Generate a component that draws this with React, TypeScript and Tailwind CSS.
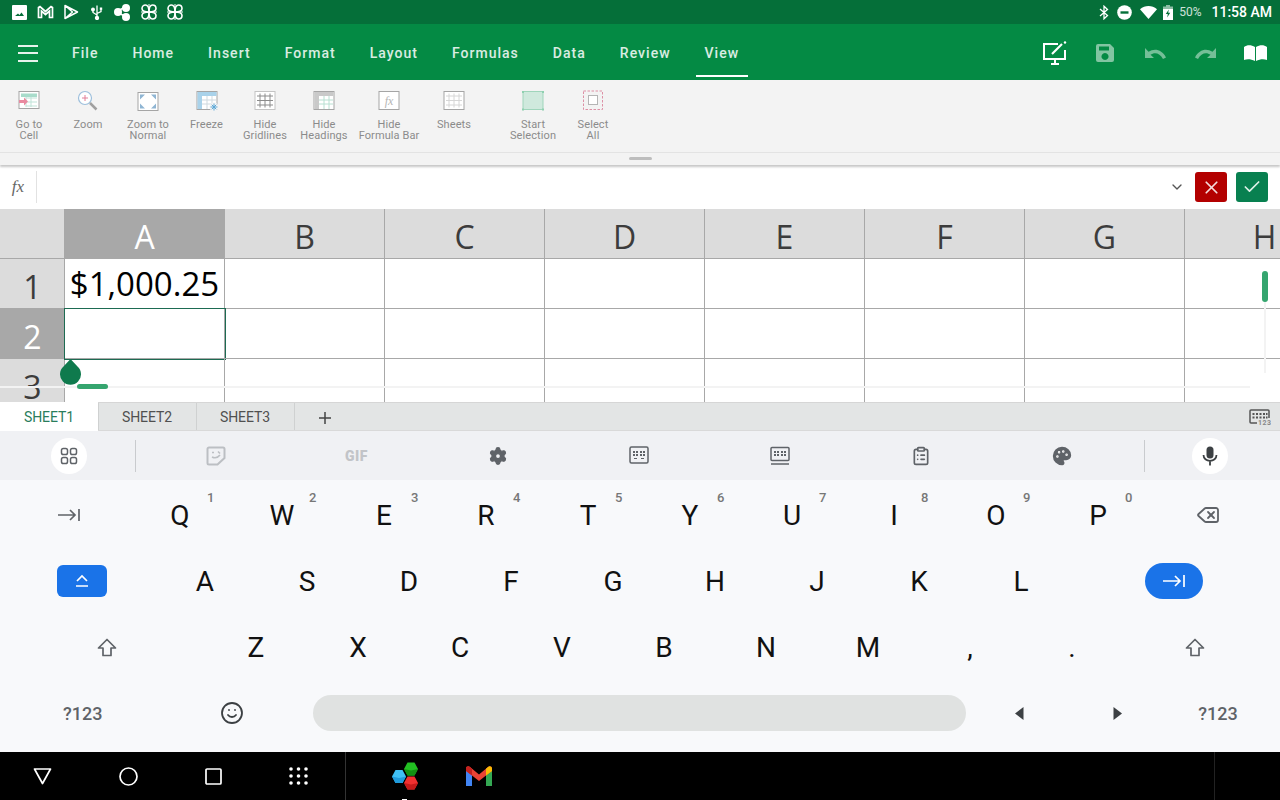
import { ReactNode } from 'react';
import { ChevronDown, Check, X, Settings, ClipboardList, Palette, Smile, Delete } from 'lucide-react';

const menuItems = ['File', 'Home', 'Insert', 'Format', 'Layout', 'Formulas', 'Data', 'Review', 'View'];
const columns = ['A', 'B', 'C', 'D', 'E', 'F', 'G', 'H'];

function Flower() {
  return (
    <svg width="18" height="18" viewBox="0 0 18 18" fill="none" stroke="white" strokeWidth="1.600">
      <path d="M9 9C9 4 7.500 2 5.500 2S2 3.500 2 5.500 4 9 9 9ZM9 9C9 4 10.500 2 12.500 2S16 3.500 16 5.500 14 9 9 9ZM9 9C9 14 7.500 16 5.500 16S2 14.500 2 12.500 4 9 9 9ZM9 9C9 14 10.500 16 12.500 16S16 14.500 16 12.500 14 9 9 9Z" />
      <path d="M1 9H17M9 1V17" strokeWidth="1" />
    </svg>
  );
}

function StatusBar() {
  return (
    <div className="flex h-6 items-center bg-[#056f39] text-white">
      <div className="ml-3 flex items-center">
        <svg width="15" height="15" viewBox="0 0 15 15" fill="white">
          <path fillRule="evenodd" d="M1 0h13a1 1 0 0 1 1 1v13a1 1 0 0 1-1 1H1a1 1 0 0 1-1-1V1a1 1 0 0 1 1-1ZM3 11h9L9.500 7.500 7.500 10 6 8.500Z" />
        </svg>
        <svg className="ml-[10px]" width="17" height="14" viewBox="0 0 17 14" fill="none" stroke="white" strokeWidth="1.700">
          <path d="M1.500 12.500V2.500L3 1.500 8.500 6.500 14 1.500 15.500 2.500V12.500H12.500V6L8.500 9.500 4.500 6V12.500Z" />
        </svg>
        <svg className="ml-[9px]" width="16" height="16" viewBox="0 0 16 16" fill="none" stroke="white" strokeWidth="1.500">
          <path d="M2 1.500 14.500 8 2 14.500ZM2 1.500 9.500 8 2 14.500" strokeLinejoin="round" />
        </svg>
        <svg className="ml-[12px]" width="12" height="16" viewBox="0 0 12 16" fill="none" stroke="white" strokeWidth="1.300">
          <path d="M6 1.500V14M6 11 2 8.500V6M6 9.500 10 7.500V5.500" />
          <circle cx="6" cy="14" r="1.500" fill="white" />
          <circle cx="2" cy="5.500" r="1.300" fill="white" />
          <rect x="8.800" y="3.500" width="2.400" height="2.400" fill="white" stroke="none" />
        </svg>
        <svg className="ml-[11px]" width="17" height="17" viewBox="0 0 17 17" fill="white">
          <circle cx="4" cy="8" r="4" />
          <circle cx="12" cy="4" r="4" />
          <circle cx="12" cy="13" r="4" />
          <path d="M4 7 11 3M4 9 11 12" stroke="white" strokeWidth="1.500" />
        </svg>
        <div className="ml-[9px]"><Flower /></div>
        <div className="ml-2"><Flower /></div>
      </div>
      <div className="ml-auto flex items-center pr-2">
        <svg width="10" height="15" viewBox="0 0 10 15" fill="none" stroke="white" strokeWidth="1.300">
          <path d="M1 4 8.500 10.500 5 13.800V1.200L8.500 4.500 1 11" />
        </svg>
        <svg className="ml-[8px]" width="15" height="15" viewBox="0 0 15 15">
          <circle cx="7.500" cy="7.500" r="7.300" fill="white" />
          <rect x="3.500" y="6.300" width="8" height="2.400" fill="#056f39" />
        </svg>
        <svg className="ml-[8px]" width="17" height="13" viewBox="0 0 17 13" fill="white">
          <path d="M0 3.200C5-1 12-1 17 3.200L8.500 13Z" />
        </svg>
        <svg className="ml-[6px]" width="10" height="15" viewBox="0 0 10 15">
          <path d="M3 0h4v1.500h3V15H0V1.500h3Z" fill="white" />
          <path d="M0 0h10v4H0Z" fill="#056f39" fillOpacity="0.45" />
          <path d="M5.800 4.500 2.800 9h2l-.6 3.500 3-4.700h-2Z" fill="#056f39" />
        </svg>
        <span className="ml-[6px] font-['Roboto',sans-serif] text-[12px] text-white/80">50%</span>
        <span className="ml-[10px] font-['Roboto',sans-serif] text-[14px] font-medium">11:58 AM</span>
      </div>
    </div>
  );
}

function Toolbar() {
  return (
    <div className="flex h-14 items-center bg-[#048a44] pt-[2px] font-['Roboto',sans-serif] text-white">
      <div className="ml-[18px] flex h-[17px] w-5 flex-col justify-between">
        <div className="h-0.5 bg-white/90" />
        <div className="h-0.5 bg-white/90" />
        <div className="h-0.5 bg-white/90" />
      </div>
      <div className="ml-[34px] flex h-full items-center gap-[34px]">
        {menuItems.map((item) => (
          <div key={item} className="relative flex h-full items-center text-[14px] font-medium tracking-[1.02px] text-white/85">
            {item}
            {item === 'View' && <div className="absolute -inset-x-[9px] bottom-[3px] h-0.5 bg-white" />}
          </div>
        ))}
      </div>
      <div className="ml-auto flex items-center">
        <div className="flex w-[50px] justify-center">
          <svg width="26" height="24" viewBox="0 0 26 24" fill="none" stroke="white" strokeWidth="2">
            <path d="M16 3H2V18H23V9" />
            <path d="M9 23H17M13 18V23" />
            <path d="M10 13 20 3" strokeWidth="2.200" />
            <circle cx="23" cy="1.500" r="1.200" fill="white" stroke="none" />
          </svg>
        </div>
        <div className="flex w-[50px] justify-center">
          <svg width="18" height="18" viewBox="0 0 18 18" fill="white" fillOpacity="0.5">
            <path fillRule="evenodd" d="M2 0h12l4 4v12a2 2 0 0 1-2 2H2a2 2 0 0 1-2-2V2a2 2 0 0 1 2-2ZM3 2.500V6.500H13V2.500ZM9 9a3.500 3.500 0 1 0 .01 0Z" />
          </svg>
        </div>
        <div className="flex w-[50px] justify-center">
          <svg width="21" height="11" viewBox="0 0 21 11" fill="white" fillOpacity="0.45">
            <path d="M0 0V10H9L5.500 6.800C9.500 3.800 15 5 18 11L21 9.500C17 1.500 9.500 0 3.500 3.800Z" />
          </svg>
        </div>
        <div className="flex w-[50px] justify-center">
          <svg width="21" height="11" viewBox="0 0 21 11" fill="white" fillOpacity="0.45">
            <path d="M21 0V10H12L15.500 6.800C11.500 3.800 6 5 3 11L0 9.500C4 1.500 11.500 0 17.500 3.800Z" />
          </svg>
        </div>
        <div className="flex w-[50px] justify-center">
          <svg width="23" height="17" viewBox="0 0 23 17" fill="white">
            <path d="M0 2C3-.3 7-.5 11 2V16C7 14 3 14 0 15ZM12 2C16-.5 20-.3 23 2V15C20 14 16 14 12 16Z" />
          </svg>
        </div>
      </div>
    </div>
  );
}

function RibbonIcon({ children }: { children: ReactNode }) {
  return (
    <svg width="26" height="26" viewBox="0 0 26 26" fill="none">
      {children}
    </svg>
  );
}

const grayFrame = '#a5a5a5';

const ribbonItems: { lines: string[]; width: string; icon: ReactNode }[] = [
  {
    lines: ['Go to', 'Cell'],
    width: 'w-[58px]',
    icon: (
      <RibbonIcon>
        <rect x="3" y="2.500" width="20" height="17" stroke={grayFrame} fill="white" />
        <rect x="5" y="4.500" width="16" height="3.500" fill="#a8dccb" />
        <path d="M10 9H21M10 13H21M10 17H21M15 8V18M10 8V18" stroke="#bfe3d8" />
        <path d="M3 11H8V8.500L12 12.500 8 16.500V14H3Z" fill="#e98aa0" />
      </RibbonIcon>
    ),
  },
  {
    lines: ['Zoom'],
    width: 'w-[60px]',
    icon: (
      <RibbonIcon>
        <circle cx="10" cy="9" r="6.500" stroke="#9dbfdc" strokeWidth="1.200" fill="white" />
        <path d="M7 9H13M10 6V12" stroke="#e27f98" />
        <path d="M15 14 21.500 20.500" stroke="#a0a0a0" strokeWidth="2.500" />
      </RibbonIcon>
    ),
  },
  {
    lines: ['Zoom to', 'Normal'],
    width: 'w-[60px]',
    icon: (
      <RibbonIcon>
        <rect x="3" y="3.500" width="20" height="18" stroke={grayFrame} fill="white" />
        <path d="M5 5.500H10L5 10.500ZM21 5.500H16L21 10.500ZM5 19.500H10L5 14.500ZM21 19.500H16L21 14.500Z" fill="#8fb5d3" />
      </RibbonIcon>
    ),
  },
  {
    lines: ['Freeze'],
    width: 'w-[57px]',
    icon: (
      <RibbonIcon>
        <rect x="3" y="2.500" width="20" height="18" stroke={grayFrame} fill="white" />
        <path d="M3.500 3H22.500V7H8V20H3.500Z" fill="#a9d2ea" />
        <path d="M8 11H22M8 15H20M13 7V20M18 7V18" stroke="#cfd9df" />
        <circle cx="20" cy="18" r="4.500" fill="#f3f3f3" />
        <path d="M20 14.500V21.500M16.500 18H23.500M17.700 15.700 22.300 20.300M22.300 15.700 17.700 20.300" stroke="#5ba7d6" />
      </RibbonIcon>
    ),
  },
  {
    lines: ['Hide', 'Gridlines'],
    width: 'w-[60px]',
    icon: (
      <RibbonIcon>
        <rect x="3" y="2.500" width="20" height="18" stroke="#c4c4c4" fill="white" />
        <path d="M5 7H21M5 11.500H21M5 16H21M8 4.500V18.500M13 4.500V18.500M18 4.500V18.500" stroke="#8c8c8c" />
      </RibbonIcon>
    ),
  },
  {
    lines: ['Hide', 'Headings'],
    width: 'w-[58px]',
    icon: (
      <RibbonIcon>
        <rect x="3" y="2.500" width="20" height="18" stroke={grayFrame} fill="white" />
        <path d="M3.500 3H22.500V7H8V20H3.500Z" fill="#c9c9c9" />
        <path d="M8 11H22M8 15H22M13 7V20M18 7V20" stroke="#b8e0d2" />
      </RibbonIcon>
    ),
  },
  {
    lines: ['Hide', 'Formula Bar'],
    width: 'w-[72px]',
    icon: (
      <RibbonIcon>
        <rect x="3" y="2.500" width="20" height="18" stroke={grayFrame} fill="white" />
        <text x="13" y="15.500" textAnchor="middle" fontFamily="'Liberation Serif', serif" fontStyle="italic" fontSize="12" fill="#b5b5b5">
          fx
        </text>
      </RibbonIcon>
    ),
  },
  {
    lines: ['Sheets'],
    width: 'w-[58px]',
    icon: (
      <RibbonIcon>
        <rect x="3" y="2.500" width="20" height="18" stroke={grayFrame} fill="white" />
        <path d="M5 7H21M5 11.500H21M5 16H21M8 4.500V18.500M13 4.500V18.500M18 4.500V18.500" stroke="#d6d6d6" />
      </RibbonIcon>
    ),
  },
  {
    lines: ['Start', 'Selection'],
    width: 'ml-5 w-[60px]',
    icon: (
      <RibbonIcon>
        <rect x="3" y="2.500" width="20" height="18" stroke="#9fd5bb" fill="#cfe9dd" />
        <path d="M2 2h2v2H2ZM22 2h2v2h-2ZM2 19.500h2v2H2ZM22 19.500h2v2h-2Z" fill="#8fd0b0" />
      </RibbonIcon>
    ),
  },
  {
    lines: ['Select', 'All'],
    width: 'w-[60px]',
    icon: (
      <RibbonIcon>
        <rect x="3.500" y="2" width="19" height="18.500" stroke="#dd90a5" strokeDasharray="2.500 1.500" />
        <rect x="8.500" y="6.500" width="9" height="9" stroke="#b5b5b5" fill="white" />
      </RibbonIcon>
    ),
  },
];

function Ribbon() {
  return (
    <div className="relative z-10 bg-[#f3f3f3] shadow-[0_2px_2px_rgba(0,0,0,0.22)]">
      <div className="flex h-[73px] border-b border-[#e3e3e3] pt-[9px]">
        {ribbonItems.map((item) => (
          <div key={item.lines.join(' ')} className={`flex flex-col items-center ${item.width}`}>
            {item.icon}
            <div className="mt-[4px] text-center font-['Roboto',sans-serif] text-[11px] leading-[11px] tracking-[0.1px] text-[#8b8b8b]">
              {item.lines.map((line) => (
                <div key={line} className="whitespace-nowrap">{line}</div>
              ))}
            </div>
          </div>
        ))}
      </div>
      <div className="flex h-3 justify-center pt-[4px]">
        <div className="h-[3px] w-[23px] rounded-full bg-[#bdbdbd]" />
      </div>
    </div>
  );
}

function FormulaBar() {
  return (
    <div className="flex h-[44px] items-center bg-white">
      <div className="w-9 text-center font-['Liberation_Serif',serif] text-[17px] italic text-[#666666]">fx</div>
      <div className="h-[32px] w-px bg-[#e2e2e2]" />
      <ChevronDown className="ml-auto text-[#555555]" size={16} strokeWidth={2} />
      <div className="ml-[10px] flex h-[30px] w-8 items-center justify-center rounded-[3px] bg-[#b30000]">
        <X className="text-[#f4dcdc]" size={21} strokeWidth={2} />
      </div>
      <div className="ml-[9px] mr-3 flex h-[30px] w-8 items-center justify-center rounded-[3px] bg-[#088050]">
        <Check className="text-[#dff0e8]" size={20} strokeWidth={2} />
      </div>
    </div>
  );
}

function Grid() {
  const headBase = 'flex items-center justify-center border-r border-[#a8a8a8] text-[32px] leading-[26px]';
  const rows = [
    { n: 1, cell: 'h-[50px] border-b', head: 'h-[50px] border-b pt-[6px]', selected: false },
    { n: 2, cell: 'h-[50px] border-b', head: 'h-[50px] border-b pt-[6px]', selected: true },
    // the last row is cut by the sheet tabs
    { n: 3, cell: 'h-[43px]', head: 'h-[43px] pt-[12px]', selected: false },
  ];
  return (
    <div className="relative h-[193px] overflow-hidden bg-white font-['Open_Sans',sans-serif]">
      <div className="grid grid-cols-[65px_repeat(8,160px)]">
        <div className={`h-[50px] border-b bg-[#dcdcdc] pt-[6px] ${headBase}`} />
        {columns.map((c) => (
          <div key={c} className={`h-[50px] border-b pt-[6px] ${headBase} ${c === 'A' ? 'bg-[#a8a8a8] text-white' : 'bg-[#dcdcdc] text-[#3c3c3c]'}`}>
            {c}
          </div>
        ))}
        {rows.map((r) => (
          <div key={r.n} className="contents">
            <div className={`${r.head} pl-px ${headBase} ${r.selected ? 'bg-[#a8a8a8] text-white' : 'bg-[#dcdcdc] text-[#3c3c3c]'}`}>{r.n}</div>
            {columns.map((c) => (
              <div key={c} className={`relative ${r.cell} border-r border-[#a8a8a8]`}>
                {r.n === 1 && c === 'A' && (
                  <div className="flex h-full items-center justify-center text-[33px] leading-none text-black">$1,000.25</div>
                )}
                {r.selected && c === 'A' && <div className="absolute -left-px -top-px h-[52px] w-[162px] border border-[#1d6b52]" />}
              </div>
            ))}
          </div>
        ))}
      </div>
      {/* scroll bars and selection handle */}
      <div className="absolute left-0 right-[30px] top-[177px] h-[2px] bg-[#f3f3f3]" />
      <div className="absolute left-[77px] top-[175px] h-[5px] w-[31px] rounded-full bg-[#35a56f]" />
      <div className="absolute right-[14px] top-[62px] h-[102px] w-[2px] bg-[#f3f3f3]" />
      <div className="absolute right-3 top-[62px] h-[31px] w-[6px] rounded-full bg-[#35a56f]" />
      <svg className="absolute left-[60px] top-[150px]" width="21" height="26" viewBox="0 0 21 26" fill="#0f7a4d">
        <path d="M10.500 0 17.500 7.500A10.500 10.500 0 1 1 3.500 7.500Z" />
      </svg>
    </div>
  );
}

function SheetTabs() {
  return (
    <div className="flex h-[29px] border-y border-[#d6d6d6] border-b-[#d9d9d9] bg-[#e3e5e5] font-['Roboto',sans-serif] text-[14px] tracking-[-0.1px]">
      <div className="-mt-px flex h-[29px] w-[98px] items-center justify-center bg-white pt-[2px] text-[#2a7d5c]">SHEET1</div>
      {['SHEET2', 'SHEET3'].map((s) => (
        <div key={s} className="flex w-[98px] items-center justify-center border-l border-[#cfd1d1] pt-[2px] pr-px text-[#505050]">{s}</div>
      ))}
      <div className="flex w-[60px] items-center justify-center border-l border-[#cfd1d1] pt-[2px] text-[#444444]">
        <svg width="14" height="14" viewBox="0 0 14 14" stroke="#444444" strokeWidth="1.500">
          <path d="M1 7H13M7 1V13" />
        </svg>
      </div>
      <div className="ml-auto mr-[9px] flex items-center">
        <svg width="22" height="16" viewBox="0 0 22 16" fill="none">
          <path d="M8 14H2a1 1 0 0 1-1-1V2a1 1 0 0 1 1-1h17a1 1 0 0 1 1 1v7" stroke="#555555" strokeWidth="1.500" />
          <path d="M3.500 4h2v2h-2ZM7 4h2v2H7ZM10.500 4h2v2h-2ZM14 4h2v2h-2ZM17 4h1.500v2H17ZM3.500 7.500h2v2h-2ZM7 7.500h2v2H7ZM10.500 7.500h2v2h-2ZM14 7.500h2v2h-2ZM17 7.500h1.500v2H17Z" fill="#555555" />
          <text x="9" y="15.500" fontFamily="Roboto, sans-serif" fontSize="7" fontWeight="700" letterSpacing="0.500" fill="#888888">123</text>
        </svg>
      </div>
    </div>
  );
}

function SplitKeyboardGlyph() {
  return (
    <svg width="20" height="18" viewBox="0 0 20 18" fill="none">
      <rect x="1" y="1" width="18" height="16" rx="1.500" stroke="#5f6368" strokeWidth="1.500" />
      <path d="M4 5h2v2H4ZM7 5h2v2H7ZM11 5h2v2h-2ZM14 5h2v2h-2ZM4 8h2v2H4ZM7 8h2v2H7ZM11 8h2v2h-2ZM14 8h2v2h-2ZM5 12h3v1H5ZM12 12h3v1h-3Z" fill="#5f6368" />
    </svg>
  );
}

function KeyboardGlyph() {
  return (
    <svg width="20" height="19" viewBox="0 0 20 19" fill="none">
      <rect x="1" y="1.500" width="18" height="13" rx="1" stroke="#5f6368" strokeWidth="1.500" />
      <path d="M4 5h2v2H4ZM7 5h2v2H7ZM11 5h2v2h-2ZM14 5h2v2h-2ZM4 8h2v2H4ZM7 8h2v2H7ZM11 8h2v2h-2ZM14 8h2v2h-2Z" fill="#5f6368" />
      <path d="M1 18H19" stroke="#5f6368" strokeWidth="1.500" />
    </svg>
  );
}

function KeyboardStrip() {
  const slot = 'flex w-[141px] justify-center text-[#5f6368]';
  return (
    <div className="flex h-[49px] items-center bg-[#f0f1f4] pt-[1px]">
      <div className="ml-[51px] flex size-9 items-center justify-center rounded-full bg-white">
        <svg width="18" height="18" viewBox="0 0 18 18" fill="none" stroke="#5f6368" strokeWidth="1.500">
          <rect x="1.500" y="1.500" width="6" height="6" rx="1.800" />
          <rect x="10.500" y="1.500" width="6" height="6" rx="1.800" />
          <rect x="1.500" y="10.500" width="6" height="6" rx="1.800" />
          <rect x="10.500" y="10.500" width="6" height="6" rx="1.800" />
        </svg>
      </div>
      <div className="ml-[48px] h-8 w-px bg-[#c9cbce]" />
      <div className="ml-[9px] flex">
        <div className={slot}>
          <svg width="20" height="20" viewBox="0 0 20 20" fill="none">
            <path d="M3 1.500H17A1.500 1.500 0 0 1 18.500 3V12L11.500 18.500H3A1.500 1.500 0 0 1 1.500 17V3A1.500 1.500 0 0 1 3 1.500Z" stroke="#bcbfc3" strokeWidth="2" />
            <path d="M6 6.500H8M12 5.500 14 7.500M6 11C9 12.500 12 11.500 14 9" stroke="#bcbfc3" strokeWidth="1.600" />
          </svg>
        </div>
        <div className={slot}>
          <span className="font-['Roboto',sans-serif] text-[14px] font-black tracking-[0.5px] text-[#c2c4c8]">GIF</span>
        </div>
        <div className={slot}><Settings size={20} fill="#5f6368" stroke="#5f6368" strokeWidth={1.500} className="[&>circle]:fill-[#f0f1f4]" /></div>
        <div className={slot}><SplitKeyboardGlyph /></div>
        <div className={slot}><KeyboardGlyph /></div>
        <div className={slot}><ClipboardList size={20} strokeWidth={2} /></div>
        <div className={slot}><Palette size={20} fill="#5f6368" stroke="#5f6368" className="[&>circle]:fill-white [&>circle]:stroke-white" /></div>
      </div>
      <div className="ml-[12px] h-8 w-px bg-[#c9cbce]" />
      <div className="ml-[47px] flex size-9 items-center justify-center rounded-full bg-white">
        <svg width="16" height="20" viewBox="0 0 16 20" fill="none">
          <rect x="4.500" y="0.500" width="7" height="12" rx="3.500" fill="#3c4043" />
          <path d="M1.500 9C1.500 12.500 4.500 14.800 8 14.800S14.500 12.500 14.500 9M8 14.500V19.500" stroke="#3c4043" strokeWidth="1.800" />
        </svg>
      </div>
    </div>
  );
}

function TabArrow({ color }: { color: string }) {
  return (
    <svg width="24" height="16" viewBox="0 0 24 16" fill="none" stroke={color} strokeWidth="1.700">
      <path d="M1 8H18M13 3 18 8 13 13M22 2V14" />
    </svg>
  );
}

function ShiftArrow() {
  return (
    <svg width="20" height="19" viewBox="0 0 20 19" fill="none" stroke="#5f6368" strokeWidth="1.700" strokeLinejoin="round">
      <path d="M10 1.500 18.500 10H14V17.500H6V10H1.500Z" />
    </svg>
  );
}

function LetterKey({ label, hint }: { label: string; hint?: string }) {
  return (
    <div className="relative flex h-full w-[102px] items-center justify-center pt-[2px] font-['Roboto',sans-serif] text-[28px] text-[#111111]">
      {label}
      {hint && <span className="absolute left-[78px] top-[6px] text-[13px] font-medium text-[#777777]">{hint}</span>}
    </div>
  );
}

// flat-top hexagon with a darker lower half, for the office app logo
function Hex({ cx, cy, top, bottom }: { cx: number; cy: number; top: string; bottom: string }) {
  const outline = [
    [cx - 3.5, cy - 6.5],
    [cx + 3.5, cy - 6.5],
    [cx + 7, cy],
    [cx + 3.5, cy + 6.5],
    [cx - 3.5, cy + 6.5],
    [cx - 7, cy],
  ];
  const lower = [
    [cx - 7, cy],
    [cx, cy + 1.5],
    [cx + 7, cy],
    [cx + 3.5, cy + 6.5],
    [cx - 3.5, cy + 6.5],
  ];
  return (
    <>
      <polygon points={outline.map((p) => p.join(',')).join(' ')} fill={top} />
      <polygon points={lower.map((p) => p.join(',')).join(' ')} fill={bottom} />
    </>
  );
}

function Keyboard() {
  const row = 'flex h-[66px] items-center';
  return (
    <div className="bg-[#f8f9fb] pb-[6px] pt-[2px] font-['Roboto',sans-serif]">
      <div className={row}>
        <div className="ml-[57px] mr-[48px]"><TabArrow color="#5f6368" /></div>
        {['Q', 'W', 'E', 'R', 'T', 'Y', 'U', 'I', 'O', 'P'].map((k, i) => (
          <LetterKey key={k} label={k} hint={String((i + 1) % 10)} />
        ))}
        <Delete className="ml-[47px] text-[#5f6368]" size={24} strokeWidth={1.800} />
      </div>
      <div className={row}>
        <div className="ml-[57px] mr-[47px] flex h-8 w-[50px] items-center justify-center rounded-md bg-[#1a73e8]">
          <svg width="14" height="14" viewBox="0 0 14 14" fill="none" stroke="white" strokeWidth="1.700">
            <path d="M2 7 7 2 12 7M1 12H13" />
          </svg>
        </div>
        {['A', 'S', 'D', 'F', 'G', 'H', 'J', 'K', 'L'].map((k) => (
          <LetterKey key={k} label={k} />
        ))}
        <div className="ml-[73px] flex h-9 w-[58px] items-center justify-center rounded-full bg-[#1a73e8]">
          <TabArrow color="white" />
        </div>
      </div>
      <div className={row}>
        <div className="ml-[97px] mr-[88px]"><ShiftArrow /></div>
        {['Z', 'X', 'C', 'V', 'B', 'N', 'M', ',', '.'].map((k) => (
          <LetterKey key={k} label={k} />
        ))}
        <div className="ml-[62px]"><ShiftArrow /></div>
      </div>
      <div className={`${row} text-[18px] font-medium text-[#5f6368]`}>
        <div className="ml-[63px] w-[38px] whitespace-nowrap text-center">?123</div>
        <Smile className="ml-[119px] text-[#3c4043]" size={24} strokeWidth={1.800} />
        <div className="ml-[69px] h-9 w-[653px] rounded-full bg-[#e0e2e1]" />
        <svg className="ml-[49px]" width="9" height="13" viewBox="0 0 9 13" fill="#3c4043"><path d="M8.500 0V13L0 6.500Z" /></svg>
        <svg className="ml-[89px]" width="9" height="13" viewBox="0 0 9 13" fill="#3c4043"><path d="M.5 0V13L9 6.500Z" /></svg>
        <div className="ml-[74px] w-[44px] whitespace-nowrap text-center">?123</div>
      </div>
    </div>
  );
}

function NavBar() {
  return (
    <div className="relative flex h-12 items-center bg-black">
      <svg className="ml-[33px]" width="19" height="17" viewBox="0 0 19 17" fill="none" stroke="white" strokeWidth="1.700">
        <path d="M1.500 1H17.500L9.500 15.500Z" strokeLinejoin="round" />
      </svg>
      <svg className="ml-[67px]" width="19" height="19" viewBox="0 0 19 19" fill="none" stroke="white" strokeWidth="1.700">
        <circle cx="9.500" cy="9.500" r="8.500" />
      </svg>
      <svg className="ml-[67px]" width="17" height="17" viewBox="0 0 17 17" fill="none" stroke="white" strokeWidth="1.700">
        <rect x="1" y="1" width="15" height="15" rx="1" />
      </svg>
      <svg className="ml-[67px]" width="19" height="18" viewBox="0 0 19 18" fill="white">
        {[2, 9.5, 17].flatMap((x) =>
          [2, 9, 16].map((y) => <circle key={`${x}-${y}`} cx={x} cy={y} r="1.800" />),
        )}
      </svg>
      <div className="ml-[37px] h-full w-px bg-[#333333]" />
      <svg className="ml-[45px]" width="28" height="28" viewBox="0 0 28 28">
        <Hex cx={8} cy={14.5} top="#3fc0f5" bottom="#1f9bdc" />
        <Hex cx={20} cy={7} top="#22c022" bottom="#129012" />
        <Hex cx={20} cy={21} top="#f23030" bottom="#c61a1a" />
      </svg>
      <svg className="ml-[47px]" width="26" height="20" viewBox="0 0 26 20">
        <path d="M0 4V20H6V8Z" fill="#4285f4" />
        <path d="M20 8V20H26V4Z" fill="#34a853" />
        <path d="M0 2.500C0 .5 2.500-.5 4 1L13 8.500 22 1C23.500-.5 26 .5 26 2.500V5L20 9.500 13 15 6 9.500 0 5Z" fill="#ea4335" />
        <path d="M0 2.500C0 .5 2.500-.5 4 1L6 2.700V9.500L0 5Z" fill="#c5221f" />
        <path d="M26 2.500C26 .5 23.500-.5 22 1L20 2.700V9.500L26 5Z" fill="#fbbc04" />
      </svg>
      <div className="absolute right-[65px] top-0 h-full w-px bg-[#222222]" />
      <div className="absolute bottom-0 left-[402px] h-px w-[5px] bg-white" />
    </div>
  );
}

export default function App() {
  return (
    <div className="flex h-[800px] w-[1280px] flex-col overflow-hidden bg-white">
      <StatusBar />
      <Toolbar />
      <Ribbon />
      <FormulaBar />
      <Grid />
      <SheetTabs />
      <KeyboardStrip />
      <Keyboard />
      <NavBar />
    </div>
  );
}
